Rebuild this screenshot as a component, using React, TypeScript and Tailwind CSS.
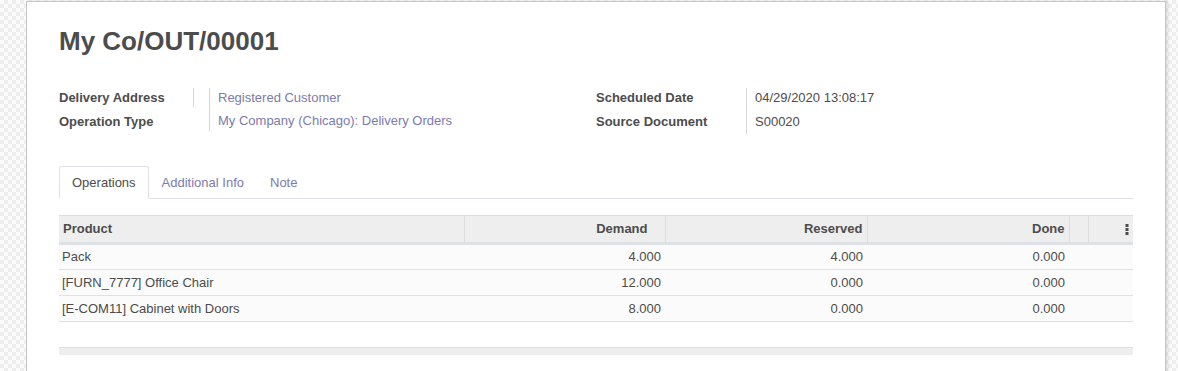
import { useState } from "react";

const rows = [
  { product: "Pack", demand: "4.000", reserved: "4.000", done: "0.000" },
  { product: "[FURN_7777] Office Chair", demand: "12.000", reserved: "0.000", done: "0.000" },
  { product: "[E-COM11] Cabinet with Doors", demand: "8.000", reserved: "0.000", done: "0.000" },
];

const tabs = ["Operations", "Additional Info", "Note"];

const Kebab = () => (
  <svg width="4" height="11" viewBox="0 0 4 11" className="inline-block">
    <rect x="0.5" y="0" width="3" height="3" fill="#4c4c4c" />
    <rect x="0.5" y="4" width="3" height="3" fill="#4c4c4c" />
    <rect x="0.5" y="8" width="3" height="3" fill="#4c4c4c" />
  </svg>
);

const App = () => {
  const [tab, setTab] = useState("Operations");

  return (
    <div
      className="w-[1178px] h-[371px] overflow-hidden pl-[26px] pt-px bg-[repeating-conic-gradient(#eeeeee_0%_25%,#fbfbfb_0%_50%)] bg-[length:8px_8px] text-[13px] text-[#4c4c4c]"
      style={{ fontFamily: '"Liberation Sans", Arial, sans-serif' }}
    >
      <div className="w-[1140px] h-[400px] bg-white border border-[#c6c6d0] shadow-[2px_0_3px_rgba(0,0,0,0.12)] px-8 pt-[22px]">
        <h1 className="text-[26px] leading-[34px] font-bold text-[#4c4c4c]">My Co/OUT/00001</h1>

        {/* header groups */}
        <div className="flex mt-[30px]">
          <div className="w-[537px] flex">
            <div className="flex flex-col">
              <div className="h-[19px] flex items-center w-[135px] font-bold border-r border-[#d8d8d8]">
                Delivery Address
              </div>
              <div className="h-[25px] flex items-end pb-[1px] w-[135px] font-bold">Operation Type</div>
            </div>
            <div className="ml-[15px] border-l border-[#d8d8d8] pl-[8px] flex flex-col h-[43px] text-[#7c7bad]">
              <div className="h-[19px] flex items-center">Registered Customer</div>
              <div className="h-[25px] flex items-end pb-[1px]">My Company (Chicago): Delivery Orders</div>
            </div>
          </div>
          <div className="flex">
            <div className="flex flex-col w-[150px] font-bold">
              <div className="h-[19px] flex items-center">Scheduled Date</div>
              <div className="h-[25px] flex items-end pb-[1px]">Source Document</div>
            </div>
            <div className="border-l border-[#d8d8d8] pl-[8px] flex flex-col h-[46px]">
              <div className="h-[19px] flex items-center">04/29/2020 13:08:17</div>
              <div className="h-[25px] flex items-end pb-[1px]">S00020</div>
            </div>
          </div>
        </div>

        {/* tabs */}
        <div className="flex mt-[32px] border-b border-[#dee2e6] h-[33px]">
          {tabs.map((t) => (
            <button
              key={t}
              onClick={() => setTab(t)}
              className={
                t === tab
                  ? "px-[12px] h-[33px] -mb-px bg-white border border-[#dee2e6] border-b-white rounded-t-[3px] text-[#4c4c4c]"
                  : "px-[13px] h-[33px] text-[#7c7bad]"
              }
            >
              {t}
            </button>
          ))}
        </div>

        {/* table */}
        <table className="w-full mt-[16px] border-collapse">
          <thead>
            <tr className="bg-[#eeeeee] border-t border-[#dcdcdc] border-b-[3px] border-b-[#dee2e6] h-[28px] font-bold">
              <th className="text-left pl-[4px] w-[405px] border-r border-[#dddddd]">Product</th>
              <th className="text-right pr-[17px] w-[201px] border-r border-[#dddddd]">Demand</th>
              <th className="text-right pr-[4px] w-[202px] border-r border-[#dddddd]">Reserved</th>
              <th className="text-right pr-[4px] w-[202px] border-r border-[#dddddd]">Done</th>
              <th className="w-[19px] border-r border-[#dddddd]"></th>
              <th className="text-right pr-[4px]">
                <Kebab />
              </th>
            </tr>
          </thead>
          <tbody>
            {rows.map((r) => (
              <tr key={r.product} className="h-[26px] bg-[#fbfbfb] border-b border-[#e1e1e1]">
                <td className="pl-[3px]">{r.product}</td>
                <td className="text-right pr-[4px]">{r.demand}</td>
                <td className="text-right pr-[4px]">{r.reserved}</td>
                <td className="text-right pr-[4px]">{r.done}</td>
                <td></td>
                <td></td>
              </tr>
            ))}
            <tr className="h-[26px] bg-white">
              <td colSpan={6}></td>
            </tr>
          </tbody>
          <tfoot>
            <tr className="h-[7px] bg-[#eeeeee] border-t border-[#dcdcdc]">
              <td colSpan={6}></td>
            </tr>
          </tfoot>
        </table>
      </div>
    </div>
  );
};

export default App;
